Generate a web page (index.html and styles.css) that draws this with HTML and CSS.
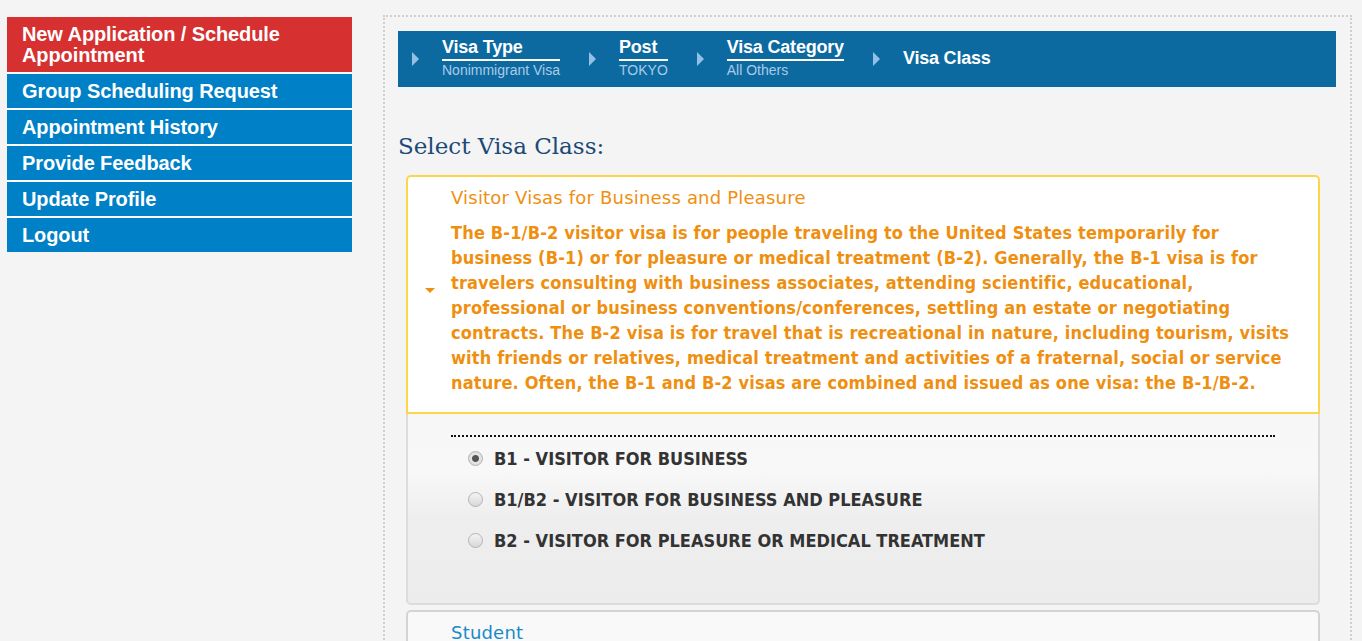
FILE: index.html
```html
<!DOCTYPE html>
<html lang="en">

<head>
    <meta charset="UTF-8">
    <meta name="viewport" content="width=device-width, initial-scale=1.0">
    <title>Select Visa Class</title>
    <link rel="stylesheet" href="styles.css">
</head>

<body>
    <div class="page">
        <nav class="sidenav">
            <a class="nav-item active" href="#">New Application / Schedule Appointment</a>
            <a class="nav-item" href="#">Group Scheduling Request</a>
            <a class="nav-item" href="#">Appointment History</a>
            <a class="nav-item" href="#">Provide Feedback</a>
            <a class="nav-item" href="#">Update Profile</a>
            <a class="nav-item" href="#">Logout</a>
        </nav>

        <main class="content">
            <div class="steps">
                <div class="step">
                    <span class="step-arrow"></span>
                    <div class="step-text">
                        <span class="step-title">Visa Type</span>
                        <span class="step-value">Nonimmigrant Visa</span>
                    </div>
                </div>
                <div class="step">
                    <span class="step-arrow"></span>
                    <div class="step-text">
                        <span class="step-title">Post</span>
                        <span class="step-value">TOKYO</span>
                    </div>
                </div>
                <div class="step">
                    <span class="step-arrow"></span>
                    <div class="step-text">
                        <span class="step-title">Visa Category</span>
                        <span class="step-value">All Others</span>
                    </div>
                </div>
                <div class="step current">
                    <span class="step-arrow"></span>
                    <div class="step-text">
                        <span class="step-title">Visa Class</span>
                    </div>
                </div>
            </div>

            <h2 class="section-title">Select Visa Class:</h2>

            <div class="visa-card open">
                <div class="card-head">
                    <span class="toggle"></span>
                    <div class="card-text">
                        <h3 class="card-title">Visitor Visas for Business and Pleasure</h3>
                        <p class="card-desc">The B-1/B-2 visitor visa is for people traveling to the United States temporarily for business (B-1) or for pleasure or medical treatment (B-2). Generally, the B-1 visa is for travelers consulting with business associates, attending scientific, educational, professional or business conventions/conferences, settling an estate or negotiating contracts. The B-2 visa is for travel that is recreational in nature, including tourism, visits with friends or relatives, medical treatment and activities of a fraternal, social or service nature. Often, the B-1 and B-2 visas are combined and issued as one visa: the B-1/B-2.</p>
                    </div>
                </div>
                <div class="card-body">
                    <div class="options">
                        <label class="option"><input type="radio" name="visaClass" checked> B1 - VISITOR FOR BUSINESS</label>
                        <label class="option"><input type="radio" name="visaClass"> B1/B2 - VISITOR FOR BUSINESS AND PLEASURE</label>
                        <label class="option"><input type="radio" name="visaClass"> B2 - VISITOR FOR PLEASURE OR MEDICAL TREATMENT</label>
                    </div>
                </div>
            </div>

            <div class="visa-card">
                <div class="card-head closed">
                    <div class="card-text">
                        <h3 class="card-title">Student</h3>
                    </div>
                </div>
            </div>
        </main>
    </div>
</body>

</html>
```

FILE: styles.css
```css
body {
    margin: 0;
    background-color: #f4f4f4;
    font-family: "Liberation Sans", Arial, sans-serif;
}

.page {
    display: flex;
    align-items: flex-start;
    padding: 15px 0 0 7px;
}

/* left menu */
.sidenav {
    display: flex;
    flex-direction: column;
    gap: 2px;
    width: 345px;
    margin-top: 2px;
    background-color: #fff;
}

.nav-item {
    display: block;
    padding: 7px 15px 6px;
    background-color: #0080c6;
    color: #fff;
    font-size: 20px;
    font-weight: bold;
    line-height: 21px;
    letter-spacing: -0.1px;
    text-decoration: none;
}

.nav-item.active {
    background-color: #d63031;
}

/* main panel */
.content {
    box-sizing: border-box;
    width: 969px;
    height: 700px;
    margin-left: 31px;
    padding: 14px 14px 0 13px;
    border: 2px dotted #cfcfcf;
}

.steps {
    box-sizing: border-box;
    display: flex;
    align-items: center;
    height: 56px;
    padding: 0 0 3px 14px;
    background-color: #0d6aa0;
}

.step {
    display: flex;
    align-items: center;
    margin-right: 29px;
}

.step-arrow {
    width: 0;
    height: 0;
    margin: 3px 23px 0 0;
    border-left: 7px solid #95c0e6;
    border-top: 7px solid transparent;
    border-bottom: 7px solid transparent;
}

.step-text {
    display: flex;
    flex-direction: column;
}

.step-title {
    padding-bottom: 2px;
    border-bottom: 2px solid #fff;
    color: #fff;
    font-size: 18px;
    font-weight: bold;
    line-height: 20px;
    letter-spacing: -0.2px;
}

.step-value {
    margin-top: 1px;
    color: #a9cbe8;
    font-size: 14px;
    line-height: 16px;
}

.step.current .step-title {
    padding-bottom: 0;
    border-bottom: none;
}

.section-title {
    margin: 45px 0 15px;
    color: #1b4a76;
    font-family: "DejaVu Serif", "Liberation Serif", serif;
    font-size: 23px;
    font-weight: normal;
    line-height: 28px;
}

/* visa cards */
.visa-card {
    margin: 0 16px 5px 8px;
    font-family: "DejaVu Sans Condensed", "DejaVu Sans", sans-serif;
    font-stretch: condensed;
}

.card-head {
    display: flex;
    align-items: center;
    padding: 9px 23px 17px 0;
    background-color: #fff;
    border: 2px solid #fdd54b;
    border-radius: 5px 5px 0 0;
}

.card-head.closed {
    padding-top: 9px;
    background-color: #f9f9f9;
    border-color: #d4d4d4;
    border-bottom: none;
}

.toggle {
    flex: none;
    width: 0;
    height: 0;
    margin: 0 16px 0 17px;
    border-top: 5px solid #ef8f10;
    border-left: 5px solid transparent;
    border-right: 5px solid transparent;
}

.card-head.closed .card-text {
    padding-left: 43px;
}

.card-text {
    flex: 1;
}

.card-title {
    margin: 0;
    color: #ef8f10;
    font-family: "DejaVu Sans", sans-serif;
    font-stretch: normal;
    font-size: 18px;
    font-weight: normal;
    line-height: 24px;
    letter-spacing: 0.2px;
}

.card-head.closed .card-title {
    color: #1a8bc8;
}

.card-desc {
    margin: 10px 0 0;
    color: #ef8f10;
    font-size: 18px;
    font-weight: bold;
    line-height: 25px;
    letter-spacing: 0.15px;
}

.card-body {
    box-sizing: border-box;
    height: 191px;
    padding: 21px 43px 0;
    border: 2px solid #dcdcdc;
    border-top: none;
    border-radius: 0 0 5px 5px;
    background: linear-gradient(#f7f7f7 0%, #f8f8f8 30%, #eeeeee 55%, #ececec 100%);
}

.options {
    padding-top: 1px;
    border-top: 2px dotted #111;
}

.option {
    display: flex;
    align-items: center;
    height: 41px;
    color: #333;
    font-size: 18px;
    font-weight: bold;
}

.option input {
    appearance: none;
    width: 15px;
    height: 15px;
    margin: 0 11px 0 17px;
    border: 1px solid #b3b3b3;
    border-radius: 50%;
    background: linear-gradient(#f4f4f4, #d8d8d8);
}

.option input:checked {
    background: radial-gradient(circle, #555 0, #555 3px, #e6e6e6 4px, #d4d4d4 100%);
}
```
